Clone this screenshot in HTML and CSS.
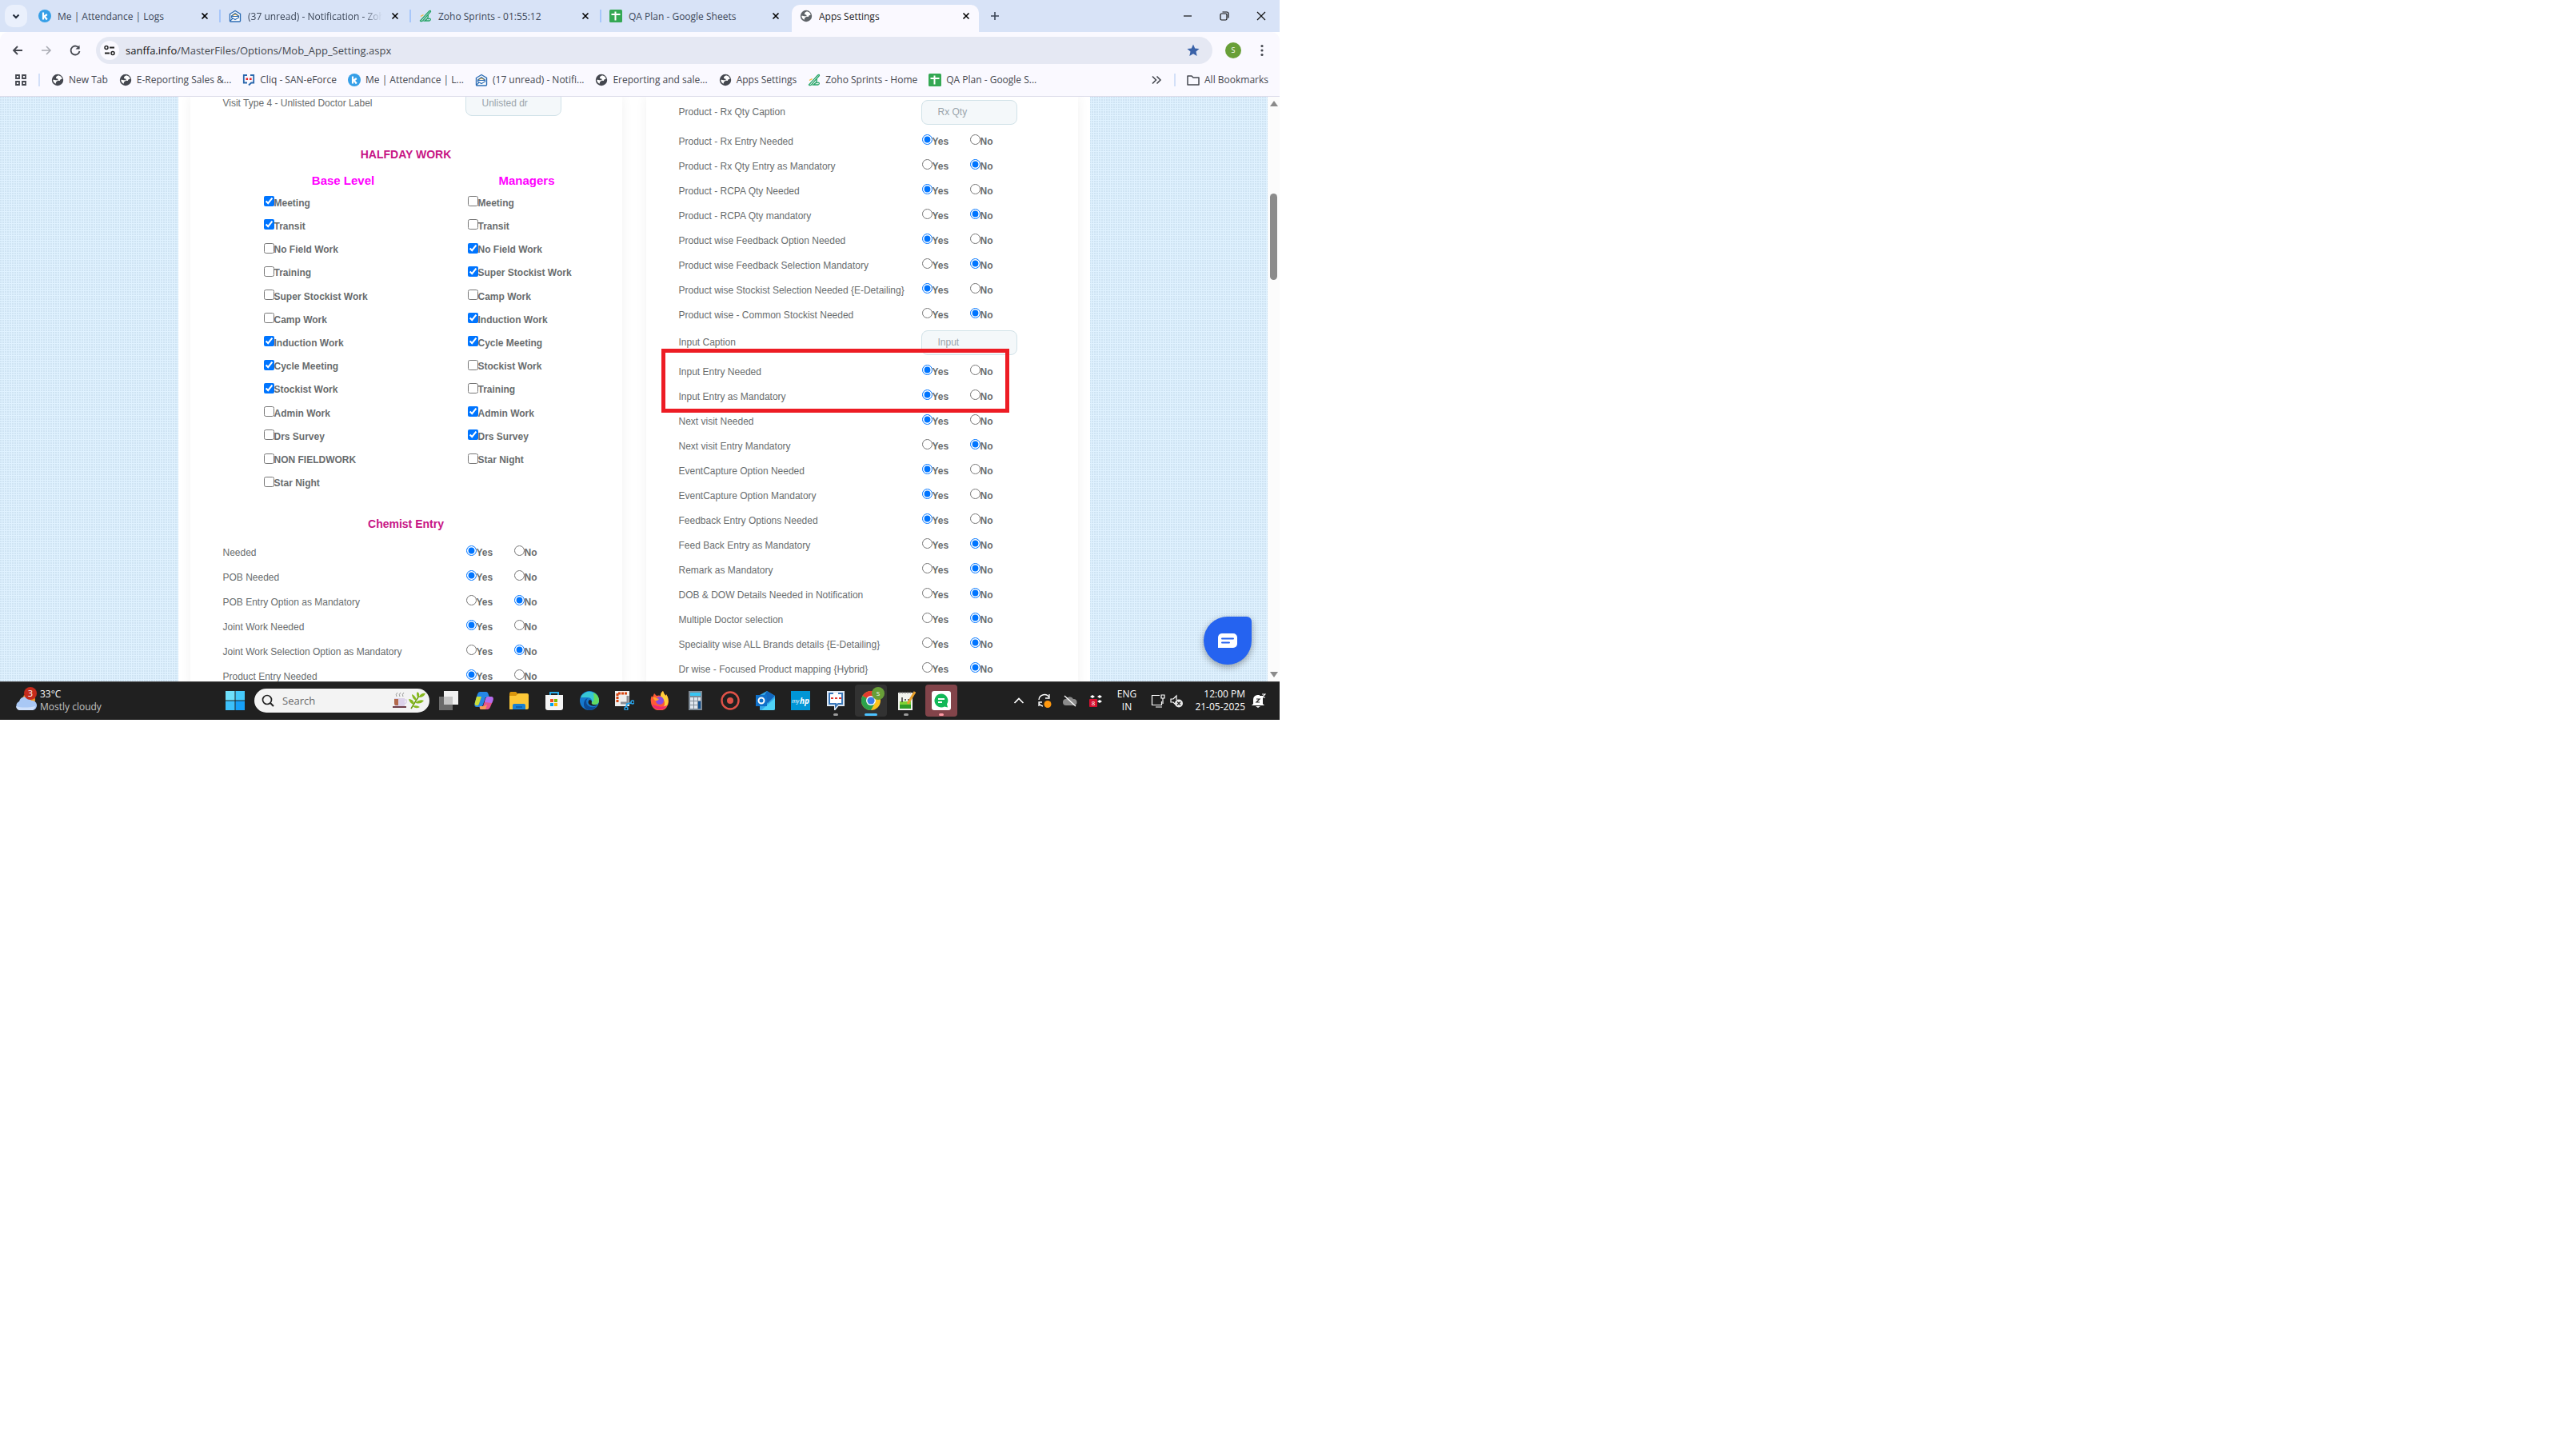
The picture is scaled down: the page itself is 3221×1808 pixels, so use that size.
FILE: index.html
```html
<!DOCTYPE html>
<html lang="en">
<head>
  <meta charset="UTF-8" />
  <meta name="viewport" content="width=device-width, initial-scale=1.0"/>
  <title>Apps Settings</title>
  <link rel="stylesheet" href="styles.css">
</head>
<body>

  <!-- Shared icons -->
  <svg class="sprite" aria-hidden="true">
    <symbol id="i-k" viewBox="0 0 16 16"><circle cx="8" cy="8" r="8" fill="#369fe7"/><path d="M6 3.500v9M10.800 6L6.800 9M7.500 8.500l3.300 4" stroke="#fff" stroke-width="2.200" fill="none"/></symbol>
    <symbol id="i-mail" viewBox="0 0 16 16"><path d="M1.500 5.500L8 1.500l6.500 4V14a1 1 0 0 1-1 1h-11a1 1 0 0 1-1-1z" fill="#fff" stroke="#2d6db5" stroke-width="1.400"/><path d="M4 8q4-4 8 0" fill="none" stroke="#f2b030" stroke-width="1.600"/><path d="M3.500 8L8 4.500 12.500 8v2L8 12.500 3.500 10zM3.500 8.500h9M2 14l3-3" fill="none" stroke="#2d6db5" stroke-width="1.100"/></symbol>
    <symbol id="i-sprint" viewBox="0 0 16 16"><path d="M1.500 14L12.500 2q2-1.500 2 0.500L5 13.500q-2 2-3.500.5zM11 6.500q1 3-1 5-1.500 1.500-3 2.500h6q2-1 1-2.500-1-1-3 .500" fill="none" stroke="#27a567" stroke-width="1.300"/><path d="M2 8.500l3.500-2" stroke="#f2b632" stroke-width="1.200"/></symbol>
    <symbol id="i-sheet" viewBox="0 0 16 16"><rect width="16" height="16" rx="1.500" fill="#34a853"/><path d="M2.500 6h11M7.500 2.500v11" stroke="#fff" stroke-width="2"/></symbol>
    <symbol id="i-globe" viewBox="0 0 16 16"><circle cx="8" cy="8" r="7.200" fill="currentColor"/><path d="M9 2.200c-1 1-3 1-3 2.800s2 1 2.500 2.200c.5 1.300-2 1.400-4 .8-1.300-.4-2.300-.2-2.300-.2.200 2 1.400 4 3.300 5l.8-2.500 2.200-1.600 2.300.3c.5-1.500 1.200-2 2.900-2.200-.3-2.400-2-4-4.700-4.600z" fill="#fff"/></symbol>
    <symbol id="i-cliq" viewBox="0 0 16 16"><path d="M6 2H1.800v9.500H6M10 2h4.200v9.500h-3L8 14.500" fill="none" stroke="#2a68ad" stroke-width="1.800"/><path d="M4.500 6.800h2.600M9 6.800h2.600" stroke="#e42527" stroke-width="2.400"/></symbol>
    <symbol id="i-close" viewBox="0 0 16 16"><path d="M4.500 4.500l7 7M11.500 4.500l-7 7" stroke="currentColor" stroke-width="1.600"/></symbol>
  </svg>

  <div class="screen">

    <!-- Browser tabs -->
    <div class="tabstrip">
      <button class="tab-search" aria-label="Search tabs"><svg viewBox="0 0 16 16"><path d="M4.500 6.500L8 10l3.500-3.500" fill="none" stroke="#1f2937" stroke-width="2"/></svg></button>
      <div class="tab"><svg class="fav"><use href="#i-k"/></svg><span>Me | Attendance | Logs</span><button aria-label="Close tab"><svg><use href="#i-close"/></svg></button></div>
      <div class="tab"><svg class="fav"><use href="#i-mail"/></svg><span class="fade">(37 unread) - Notification - Zoho</span><button aria-label="Close tab"><svg><use href="#i-close"/></svg></button></div>
      <div class="tab"><svg class="fav"><use href="#i-sprint"/></svg><span>Zoho Sprints - 01:55:12</span><button aria-label="Close tab"><svg><use href="#i-close"/></svg></button></div>
      <div class="tab last"><svg class="fav"><use href="#i-sheet"/></svg><span>QA Plan - Google Sheets</span><button aria-label="Close tab"><svg><use href="#i-close"/></svg></button></div>
      <div class="tab active"><svg class="fav"><use href="#i-globe"/></svg><span>Apps Settings</span><button aria-label="Close tab"><svg><use href="#i-close"/></svg></button></div>
      <button class="new-tab" aria-label="New tab"><svg viewBox="0 0 16 16"><path d="M8 3v10M3 8h10" stroke="#3c4758" stroke-width="1.600"/></svg></button>
      <div class="win-buttons">
        <button aria-label="Minimize"><svg viewBox="0 0 16 16"><path d="M3 8h10" stroke="#111" stroke-width="1.200"/></svg></button>
        <button aria-label="Restore"><svg viewBox="0 0 16 16"><rect x="3" y="5" width="8" height="8" rx="1.500" fill="none" stroke="#111" stroke-width="1.200"/><path d="M5.500 3H11a2 2 0 0 1 2 2v5.500" fill="none" stroke="#111" stroke-width="1.200"/></svg></button>
        <button aria-label="Close"><svg viewBox="0 0 16 16"><path d="M3 3l10 10M13 3L3 13" stroke="#111" stroke-width="1.200"/></svg></button>
      </div>
    </div>

    <!-- Address bar -->
    <div class="toolbar">
      <button aria-label="Back"><svg viewBox="0 0 16 16"><path d="M14 8H3M8 3L3 8l5 5" fill="none" stroke="#44474f" stroke-width="1.800"/></svg></button>
      <button aria-label="Forward"><svg viewBox="0 0 16 16"><path d="M2 8h11M8 3l5 5-5 5" fill="none" stroke="#a9abb3" stroke-width="1.600"/></svg></button>
      <button aria-label="Reload"><svg viewBox="0 0 16 16"><path d="M13 5.500A5.500 5.500 0 1 0 13.500 9" fill="none" stroke="#44474f" stroke-width="1.800"/><path d="M13.500 1.500v5h-5z" fill="#44474f"/></svg></button>
      <div class="omnibox">
        <span class="site-info"><svg viewBox="0 0 16 16"><path d="M8 4.500h6M2 11.500h6" stroke="#222" stroke-width="1.800"/><circle cx="4" cy="4.500" r="2" fill="none" stroke="#222" stroke-width="1.500"/><circle cx="12" cy="11.500" r="2" fill="none" stroke="#222" stroke-width="1.500"/></svg></span>
        <span class="url"><b>sanffa.info</b>/MasterFiles/Options/Mob_App_Setting.aspx</span>
        <svg class="star" viewBox="0 0 16 16"><path d="M8 .500l2.200 5 5.300.500-4 3.600 1.200 5.400L8 12.200 3.300 15l1.200-5.400-4-3.600 5.300-.500z" fill="#3a62a8"/></svg>
      </div>
      <span class="avatar">S</span>
      <button class="menu" aria-label="Menu"><svg viewBox="0 0 16 16"><circle cx="8" cy="2.500" r="1.600" fill="#44474f"/><circle cx="8" cy="8" r="1.600" fill="#44474f"/><circle cx="8" cy="13.500" r="1.600" fill="#44474f"/></svg></button>
    </div>

    <!-- Bookmarks -->
    <div class="bookmarks">
      <svg class="apps" viewBox="0 0 16 16"><path d="M2 2h4v4H2zM10 2h4v4h-4zM2 10h4v4H2zM10 10h4v4h-4z" fill="none" stroke="#44474f" stroke-width="1.800"/></svg>
      <i class="sep"></i>
      <a href="#"><svg><use href="#i-globe"/></svg>New Tab</a>
      <a href="#"><svg><use href="#i-globe"/></svg>E-Reporting Sales &amp;...</a>
      <a href="#"><svg><use href="#i-cliq"/></svg>Cliq - SAN-eForce</a>
      <a href="#"><svg><use href="#i-k"/></svg>Me | Attendance | L...</a>
      <a href="#"><svg><use href="#i-mail"/></svg>(17 unread) - Notifi...</a>
      <a href="#"><svg><use href="#i-globe"/></svg>Ereporting and sale...</a>
      <a href="#"><svg><use href="#i-globe"/></svg>Apps Settings</a>
      <a href="#"><svg><use href="#i-sprint"/></svg>Zoho Sprints - Home</a>
      <a href="#"><svg><use href="#i-sheet"/></svg>QA Plan - Google S...</a>
      <svg class="more" viewBox="0 0 16 16"><path d="M3 3.500L7.500 8 3 12.500M8.500 3.500L13 8l-4.500 4.500" fill="none" stroke="#44474f" stroke-width="1.600"/></svg>
      <i class="sep"></i>
      <a href="#" class="all"><svg viewBox="0 0 16 16"><path d="M1 3h5l2 2h7v9H1z" fill="none" stroke="#44474f" stroke-width="1.500" stroke-linejoin="round"/></svg>All Bookmarks</a>
    </div>

    <!-- Page -->
    <div class="view">
      <main class="page">
        <div class="container">

          <section class="card card-left">
            <div class="row caption"><label for="vt4">Visit Type 4 - Unlisted Doctor Label</label><input type="text" id="vt4" placeholder="Unlisted dr"></div>

            <h2 class="halfday">HALFDAY WORK</h2>
            <div class="levels">
              <div class="level">
                <h3>Base Level</h3>
                <div class="checks">
                  <label><input type="checkbox" checked>Meeting</label>
                  <label><input type="checkbox" checked>Transit</label>
                  <label><input type="checkbox">No Field Work</label>
                  <label><input type="checkbox">Training</label>
                  <label><input type="checkbox">Super Stockist Work</label>
                  <label><input type="checkbox">Camp Work</label>
                  <label><input type="checkbox" checked>Induction Work</label>
                  <label><input type="checkbox" checked>Cycle Meeting</label>
                  <label><input type="checkbox" checked>Stockist Work</label>
                  <label><input type="checkbox">Admin Work</label>
                  <label><input type="checkbox">Drs Survey</label>
                  <label><input type="checkbox">NON FIELDWORK</label>
                  <label><input type="checkbox">Star Night</label>
                </div>
              </div>
              <div class="level">
                <h3>Managers</h3>
                <div class="checks">
                  <label><input type="checkbox">Meeting</label>
                  <label><input type="checkbox">Transit</label>
                  <label><input type="checkbox" checked>No Field Work</label>
                  <label><input type="checkbox" checked>Super Stockist Work</label>
                  <label><input type="checkbox">Camp Work</label>
                  <label><input type="checkbox" checked>Induction Work</label>
                  <label><input type="checkbox" checked>Cycle Meeting</label>
                  <label><input type="checkbox">Stockist Work</label>
                  <label><input type="checkbox">Training</label>
                  <label><input type="checkbox" checked>Admin Work</label>
                  <label><input type="checkbox" checked>Drs Survey</label>
                  <label><input type="checkbox">Star Night</label>
                </div>
              </div>
            </div>

            <h2 class="chemist">Chemist Entry</h2>
            <div class="row"><span>Needed</span><label><input type="radio" name="c1" checked>Yes</label><label><input type="radio" name="c1">No</label></div>
            <div class="row"><span>POB Needed</span><label><input type="radio" name="c2" checked>Yes</label><label><input type="radio" name="c2">No</label></div>
            <div class="row"><span>POB Entry Option as Mandatory</span><label><input type="radio" name="c3">Yes</label><label><input type="radio" name="c3" checked>No</label></div>
            <div class="row"><span>Joint Work Needed</span><label><input type="radio" name="c4" checked>Yes</label><label><input type="radio" name="c4">No</label></div>
            <div class="row"><span>Joint Work Selection Option as Mandatory</span><label><input type="radio" name="c5">Yes</label><label><input type="radio" name="c5" checked>No</label></div>
            <div class="row"><span>Product Entry Needed</span><label><input type="radio" name="c6" checked>Yes</label><label><input type="radio" name="c6">No</label></div>
          </section>

          <section class="card">
            <div class="row caption"><label for="rxqty">Product - Rx Qty Caption</label><input type="text" id="rxqty" placeholder="Rx Qty"></div>
            <div class="row"><span>Product - Rx Entry Needed</span><label><input type="radio" name="d1" checked>Yes</label><label><input type="radio" name="d1">No</label></div>
            <div class="row"><span>Product - Rx Qty Entry as Mandatory</span><label><input type="radio" name="d2">Yes</label><label><input type="radio" name="d2" checked>No</label></div>
            <div class="row"><span>Product - RCPA Qty Needed</span><label><input type="radio" name="d3" checked>Yes</label><label><input type="radio" name="d3">No</label></div>
            <div class="row"><span>Product - RCPA Qty mandatory</span><label><input type="radio" name="d4">Yes</label><label><input type="radio" name="d4" checked>No</label></div>
            <div class="row"><span>Product wise Feedback Option Needed</span><label><input type="radio" name="d5" checked>Yes</label><label><input type="radio" name="d5">No</label></div>
            <div class="row"><span>Product wise Feedback Selection Mandatory</span><label><input type="radio" name="d6">Yes</label><label><input type="radio" name="d6" checked>No</label></div>
            <div class="row"><span>Product wise Stockist Selection Needed {E-Detailing}</span><label><input type="radio" name="d7" checked>Yes</label><label><input type="radio" name="d7">No</label></div>
            <div class="row"><span>Product wise - Common Stockist Needed</span><label><input type="radio" name="d8">Yes</label><label><input type="radio" name="d8" checked>No</label></div>
            <div class="row caption"><label for="inputcap">Input Caption</label><input type="text" id="inputcap" placeholder="Input"></div>
            <div class="marked">
              <div class="row"><span>Input Entry Needed</span><label><input type="radio" name="d9" checked>Yes</label><label><input type="radio" name="d9">No</label></div>
              <div class="row"><span>Input Entry as Mandatory</span><label><input type="radio" name="d10" checked>Yes</label><label><input type="radio" name="d10">No</label></div>
            </div>
            <div class="row"><span>Next visit Needed</span><label><input type="radio" name="d11" checked>Yes</label><label><input type="radio" name="d11">No</label></div>
            <div class="row"><span>Next visit Entry Mandatory</span><label><input type="radio" name="d12">Yes</label><label><input type="radio" name="d12" checked>No</label></div>
            <div class="row"><span>EventCapture Option Needed</span><label><input type="radio" name="d13" checked>Yes</label><label><input type="radio" name="d13">No</label></div>
            <div class="row"><span>EventCapture Option Mandatory</span><label><input type="radio" name="d14" checked>Yes</label><label><input type="radio" name="d14">No</label></div>
            <div class="row"><span>Feedback Entry Options Needed</span><label><input type="radio" name="d15" checked>Yes</label><label><input type="radio" name="d15">No</label></div>
            <div class="row"><span>Feed Back Entry as Mandatory</span><label><input type="radio" name="d16">Yes</label><label><input type="radio" name="d16" checked>No</label></div>
            <div class="row"><span>Remark as Mandatory</span><label><input type="radio" name="d17">Yes</label><label><input type="radio" name="d17" checked>No</label></div>
            <div class="row"><span>DOB &amp; DOW Details Needed in Notification</span><label><input type="radio" name="d18">Yes</label><label><input type="radio" name="d18" checked>No</label></div>
            <div class="row"><span>Multiple Doctor selection</span><label><input type="radio" name="d19">Yes</label><label><input type="radio" name="d19" checked>No</label></div>
            <div class="row"><span>Speciality wise ALL Brands details {E-Detailing}</span><label><input type="radio" name="d20">Yes</label><label><input type="radio" name="d20" checked>No</label></div>
            <div class="row"><span>Dr wise - Focused Product mapping {Hybrid}</span><label><input type="radio" name="d21">Yes</label><label><input type="radio" name="d21" checked>No</label></div>
          </section>

        </div>
        <button class="chat" aria-label="Chat"><svg viewBox="0 0 24 18"><path d="M5 0h14a5 5 0 0 1 5 5v8a5 5 0 0 1-5 5H0V5a5 5 0 0 1 5-5z" fill="#fff"/><path d="M5 6.500h14M5 11.500h9" stroke="#2563f0" stroke-width="2" stroke-linecap="round"/></svg></button>
      </main>
      <div class="scrollbar">
        <svg viewBox="0 0 10 7"><path d="M5 0l5 7H0z" fill="#8b8b8b"/></svg>
        <i class="thumb"></i>
        <svg viewBox="0 0 10 7"><path d="M0 0h10L5 7z" fill="#8b8b8b"/></svg>
      </div>
    </div>

    <!-- Taskbar -->
    <div class="taskbar">
      <div class="weather">
        <svg viewBox="0 0 30 34"><circle cx="18" cy="16" r="8" fill="#f59b23"/><path d="M6 29a6 6 0 0 1 0-11 8 8 0 0 1 15-1 6 6 0 0 1 2 12z" fill="#a9c8f5"/><path d="M6 29a6 6 0 0 1-4-5c6 2 16 2 24 0a6 6 0 0 1-3 5z" fill="#cfe0fa"/><circle cx="20" cy="8" r="8" fill="#c42b1c"/><text x="20" y="12" text-anchor="middle" class="badge-text">3</text></svg>
        <div><p>33°C</p><p class="dim">Mostly cloudy</p></div>
      </div>

      <div class="apps-row">
        <button aria-label="Start"><svg viewBox="0 0 24 24"><path d="M0 0h11.500v11.500H0z" fill="#6fe0fb"/><path d="M12.500 0H24v11.500H12.500z" fill="#45c9fa"/><path d="M0 12.500h11.500V24H0z" fill="#3cc0fa"/><path d="M12.500 12.500H24V24H12.500z" fill="#16a0f8"/></svg></button>
        <div class="search">
          <svg viewBox="0 0 16 16"><circle cx="7" cy="7" r="5.500" fill="none" stroke="#222" stroke-width="1.700"/><path d="M11 11l4 4" stroke="#222" stroke-width="2"/></svg>
          <input type="text" placeholder="Search" aria-label="Search">
          <svg class="cup" viewBox="0 0 42 22"><path d="M6 6q-2-3 1-5M10 6q-2-3 1-5M14 6q-2-3 1-5" stroke="#999" fill="none"/><path d="M3 8h13v10H5q-2 0-2-3z" fill="#dcd2ea"/><path d="M3 9h5v8H5q-2 0-2-3z" fill="#b3694b"/><path d="M16 10h2q1 4-2 5" fill="none" stroke="#dcd2ea" stroke-width="1.500"/><path d="M1 19h17" stroke="#6d3f4a" stroke-width="2"/><path d="M24 21L34 5" stroke="#6a9a12" stroke-width="1.500"/><path d="M32 7q-2-5 0-7 4 3 1 7zM34 6q3-5 8-4-2 5-8 5zM30 11q-5-3-5-8 5 2 6 8zM30 13q5-4 10-2-4 5-10 3zM27 16q-5-2-6-7 6 0 7 6zM26 18q5-2 9 1-5 3-9-1z" fill="#86b81e"/></svg>
        </div>
        <button aria-label="Task view"><svg viewBox="0 0 24 24"><path d="M0 7h17v17H0z" fill="#6b6b6b"/><path d="M6 0h18v17H6z" fill="#f2f2f2"/><path d="M6 7h11v10H6z" fill="#c6c6c6"/></svg></button>
        <button aria-label="Copilot"><svg viewBox="0 0 24 24"><path d="M7 1h8q2 0 3 4l1 3h-5l-3 9q-1 3-4 3H3q-4 0-2-6L4 4q1-3 3-3z" fill="#2487e6"/><path d="M1 14l2-7h6l-3 9q-1 3-4 2-2-1-1-4z" fill="#c9dc3c"/><path d="M17 23H9q-3 0-2-4h4l3-9q1-3 4-3h3q4 0 2 6l-3 7q-1 3-3 3z" fill="#e4558f"/><path d="M14 10q1-3 4-3h3q4 0 2 6l-1 2-9-1z" fill="#b36df0"/><path d="M7 19h5l4-2-2 6H9q-3 0-2-4z" fill="#f79c57"/></svg></button>
        <button aria-label="File Explorer"><svg viewBox="0 0 24 24"><path d="M0 4q0-3 2-3h6l3 3v5H0z" fill="#d9950c"/><path d="M0 6h8l3-3h11q2 0 2 2v16q0 2-2 2H0z" fill="#fcc737"/><path d="M4 23v-5q0-2 2-2h12q2 0 2 2v5z" fill="#1880d2"/><path d="M8 20h8" stroke="#0b59a4" stroke-width="1.500"/></svg></button>
        <button aria-label="Store"><svg viewBox="0 0 24 24"><path d="M7 6V2h10v4" fill="none" stroke="#27aae8" stroke-width="2"/><path d="M1 5h22v16q0 3-3 3H4q-3 0-3-3z" fill="#f5f5f5"/><path d="M7 10h4v4H7z" fill="#f05022"/><path d="M12 10h4v4h-4z" fill="#7eb900"/><path d="M7 15h4v4H7z" fill="#00a2ed"/><path d="M12 15h4v4h-4z" fill="#fdb900"/></svg></button>
        <button aria-label="Edge"><svg viewBox="0 0 24 24"><circle cx="12" cy="12" r="12" fill="#1679ce"/><path d="M1 8a12 12 0 0 1 23 4q0 5-6 5-4 0-3-3 1-5-5-6-6 0-9 0z" fill="#37c6d4"/><path d="M17 2q7 3 7 10 0 5-6 5-4 0-3-3 4 0 2-12z" fill="#63dc5f"/><path d="M10 9q-4 4 0 9 5 4 11 1-4 5-10 5-7-2-6-9 1-5 5-6z" fill="#0d4a94"/><path d="M12 11q-3 3 0 6 4 3 9 1l1-1q-6 1-7-1-1-1 0-2 0-3-3-3z" fill="#202020"/></svg></button>
        <button aria-label="Snipping Tool"><svg viewBox="0 0 24 24"><path d="M0 0h18v19H0z" fill="#eee"/><path d="M3 14V3h12" fill="none" stroke="#d8440e" stroke-width="3" stroke-dasharray="3 1"/><path d="M16 6v9h-9" fill="none" stroke="#8a8d94" stroke-width="3"/><circle cx="22" cy="14" r="2" fill="none" stroke="#29a4ea" stroke-width="1.500"/><circle cx="14" cy="22" r="2" fill="none" stroke="#29a4ea" stroke-width="1.500"/><path d="M20 15l-5 1-1 4" fill="none" stroke="#29a4ea" stroke-width="2"/></svg></button>
        <button aria-label="Firefox"><svg viewBox="0 0 24 24"><path d="M2 6l1 2 2-5 3 3q3-1 5 0 0-4 3-6 1 4 4 6l0-2q3 4 3 9a11 11 0 0 1-22 1Q0 9 2 6z" fill="#ff5a36"/><path d="M13 6q0-4 3-6 1 4 4 6l0-2q4 6 2 12-2 5-7 6 5-5 2-11z" fill="#ffcf3a"/><path d="M2 17q4 7 11 6 5 0 8-5-6 3-11 1z" fill="#ee2a73"/><circle cx="12" cy="12" r="5" fill="#8a4be0"/><path d="M3 8q3-1 5 1l3 1q-2 3-5 2z" fill="#ffa32b"/></svg></button>
        <button aria-label="Calculator"><svg viewBox="0 0 24 24"><path d="M4 0h17v24H4z" fill="#7e8a96"/><path d="M6 2h13v4H6z" fill="#38c5f2"/><path d="M6 8h4v4H6zM11 8h4v4h-4zM16 8h3v4h-3zM6 13h4v4H6zM11 13h4v4h-4zM6 18h4v4H6zM11 18h4v4h-4z" fill="#dfe6ee"/><path d="M16 13h3v9h-3z" fill="#11508f"/></svg></button>
        <button aria-label="Recorder"><svg viewBox="0 0 24 24"><circle cx="12" cy="12" r="10.500" fill="none" stroke="#e05248" stroke-width="2.400"/><circle cx="12" cy="12" r="4" fill="#e05248"/></svg></button>
        <button aria-label="Outlook"><svg viewBox="0 0 24 24"><path d="M5 5l9-5 10 6v16q0 2-2 2H5z" fill="#33a8ea"/><path d="M14 0l10 6-9 9-7-5z" fill="#1267bd"/><path d="M24 9v13q0 2-2 2H7z" fill="#4fd3f8"/><path d="M0 5h14v14H0z" fill="#0f70c9"/><circle cx="7" cy="12" r="3.500" fill="none" stroke="#fff" stroke-width="2"/></svg></button>
        <button aria-label="myHP"><svg viewBox="0 0 24 24"><path d="M0 0h24v24H0z" fill="#0096d6"/><text x="1" y="15" class="hp-my">my</text><text x="11" y="16" class="hp">hp</text></svg></button>
        <button aria-label="Cliq" class="running"><svg viewBox="0 0 24 24"><path d="M2 1h20v17h-7l-4 5v-5H2z" fill="#fff" stroke="#dfe8f2" stroke-width="2"/><path d="M9 3H4v13h8v3l3-3h5V3h-5" fill="none" stroke="#3b78ba" stroke-width="2"/><path d="M6 9h3M11 9h3M16 9h3" stroke="#e2372f" stroke-width="2"/></svg></button>
        <button aria-label="Chrome" class="running current"><svg viewBox="0 0 24 24"><circle cx="12" cy="12" r="12" fill="#fcc31e"/><path d="M12 12L1.600 6A12 12 0 0 1 22.400 6z" fill="#e33b2e"/><path d="M12 12L1.600 6A12 12 0 0 0 12 24l5-9z" fill="#2ca14c"/><circle cx="12" cy="12" r="6" fill="#fff"/><circle cx="12" cy="12" r="4.600" fill="#3b7de8"/></svg><span class="mini">S</span></button>
        <button aria-label="Notepad++" class="running"><svg viewBox="0 0 24 24"><path d="M2 2h18v22H2z" fill="#f1f3ee"/><path d="M4 13h14v9H4z" fill="#7fd134"/><path d="M4 17h14v5H4z" fill="#2f9c26"/><path d="M3 2h16" stroke="#777" stroke-width="2" stroke-dasharray="1 1"/><path d="M7 8v6M10 11h2M14 11h2" stroke="#333" stroke-width="1.500"/><path d="M23 1L14 16" stroke="#e8a02c" stroke-width="3"/></svg></button>
        <button aria-label="Chat recorder" class="running alert"><svg viewBox="0 0 24 24"><rect width="24" height="24" rx="3" fill="#fff"/><path d="M12 3.500a8.500 8.500 0 1 0 4 16l4 1-1-4a8.500 8.500 0 0 0-7-13z" fill="#12b857"/><path d="M8 10h8M8 14h5" stroke="#fff" stroke-width="2"/></svg></button>
      </div>

      <div class="tray">
        <svg viewBox="0 0 20 20"><path d="M4.500 13L10 7.500 15.500 13" fill="none" stroke="#fff" stroke-width="1.600"/></svg>
        <svg viewBox="0 0 20 20"><path d="M3 9a7 7 0 0 1 13-3M16 2v5h-5M8 17a7 7 0 0 1-5-4M3 17v-5h4" fill="none" stroke="#fff" stroke-width="1.300"/><circle cx="14" cy="14.500" r="4.500" fill="#ff980f"/></svg>
        <svg viewBox="0 0 20 20"><path d="M5 16a4 4 0 0 1 0-8 5 5 0 0 1 9 0 4 4 0 0 1 1 8z" fill="#8b8b8b"/><path d="M3 4l14 13" stroke="#fff" stroke-width="1.300"/></svg>
        <svg viewBox="0 0 20 20"><path d="M3 5l3-2 3 2-3 2zM12 5l3-2 3 2-3 2zM12 11l3-2 3 2-3 2z" fill="#fff"/><rect x="2" y="8" width="10" height="10" rx="1" fill="#d4102f"/><text x="7" y="16" text-anchor="middle" class="tiny">8</text></svg>
        <div class="lang"><p>ENG</p><p>IN</p></div>
        <svg viewBox="0 0 20 20"><path d="M12 3.500H2.500v12h12V11M7 18h8" fill="none" stroke="#fff" stroke-width="1.200"/><path d="M14 3h4v4h-4zM16 7v7" fill="none" stroke="#fff" stroke-width="1.200"/></svg>
        <svg viewBox="0 0 20 20"><path d="M9 15L6 12H3V8h3l4-4v5" fill="none" stroke="#fff" stroke-width="1.200"/><circle cx="13" cy="13.500" r="5" fill="#e8e8e8"/><path d="M11 11.500l4 4M15 11.500l-4 4" stroke="#222" stroke-width="1.300"/></svg>
        <div class="clock"><p>12:00 PM</p><p>21-05-2025</p></div>
        <svg viewBox="0 0 20 20"><path d="M4 14V9q0-5 5-6h3v1h4v10l2 2H2zM7 17h6l-3 2z" fill="#fff"/><path d="M8 8h4l-4 4h4" fill="none" stroke="#222" stroke-width="1.200"/><path d="M15 2h4l-4 4h4" fill="none" stroke="#fff" stroke-width="1.200"/></svg>
      </div>
    </div>

  </div>
</body>
</html>
```

FILE: styles.css
```css
* {
  box-sizing: border-box;
  margin: 0;
  padding: 0;
}

body {
  background-color: #ffffff;
  font-family: "Segoe UI", "Open Sans", sans-serif;
  font-size: 12px;
}

button {
  background: none;
  border: none;
  font: inherit;
  cursor: pointer;
}

svg {
  display: block;
  width: 16px;
  height: 16px;
  flex: none;
}

.sprite {
  position: absolute;
  width: 0;
  height: 0;
}

.screen {
  max-width: 1600px;
}

/* tabs */
.tabstrip {
  display: flex;
  height: 40px;
  padding: 6px 0 0 6px;
  background-color: #d8e3f7;
  color: #3c4758;
}

.tab-search {
  width: 28px;
  height: 28px;
  padding: 6px;
  margin-right: 4px;
  border-radius: 10px;
  background-color: #eaf0fc;
}

.tab {
  display: flex;
  align-items: center;
  width: 238px;
  height: 28px;
  padding: 0 12px 0 10px;
  gap: 8px;
  position: relative;
}

.tab:not(.active):not(.last)::after {
  content: "";
  position: absolute;
  right: 0;
  top: 6px;
  width: 2px;
  height: 16px;
  background-color: #a8c7fa;
}

.tab span {
  flex: 1;
  white-space: nowrap;
  overflow: hidden;
}

.tab .fade {
  mask-image: linear-gradient(to right, #000 85%, transparent);
}

.tab.active {
  width: 234px;
  height: 34px;
  padding: 0 8px 6px 10px;
  border-radius: 10px 10px 0 0;
  background-color: #faf9ff;
  color: #1f1f1f;
}

.fav {
  color: #5f6368;
}

.new-tab {
  width: 40px;
  height: 28px;
  padding: 0 12px;
}

.win-buttons {
  display: flex;
  margin-left: auto;
}

.win-buttons button {
  width: 46px;
  height: 28px;
  padding: 0 15px;
}

/* address bar */
.toolbar {
  display: flex;
  align-items: center;
  height: 46px;
  padding: 0 14px;
  gap: 20px;
  border-radius: 10px 10px 0 0;
  background-color: #faf9ff;
}

.omnibox {
  flex: 1;
  display: flex;
  align-items: center;
  height: 34px;
  gap: 8px;
  padding: 0 16px 0 5px;
  margin-left: -2px;
  border-radius: 17px;
  background-color: #e5e8f3;
}

.site-info {
  padding: 4px;
  border-radius: 50%;
  background-color: #faf9ff;
}

.url {
  flex: 1;
  font-size: 13px;
  color: #44474f;
}

.url b {
  font-weight: normal;
  color: #111111;
}

.avatar {
  width: 20px;
  height: 20px;
  margin-left: -4px;
  border-radius: 50%;
  background-color: #689f38;
  color: #ffffff;
  font-size: 9px;
  line-height: 20px;
  text-align: center;
}

.menu {
  margin-left: -2px;
}

/* bookmarks */
.bookmarks {
  display: flex;
  align-items: center;
  height: 35px;
  padding: 0 14px 7px 18px;
  gap: 14px;
  border-bottom: 1px solid #dcdcea;
  background-color: #faf9ff;
  color: #44474f;
}

.bookmarks a {
  display: flex;
  align-items: center;
  gap: 6px;
  color: inherit;
  text-decoration: none;
  white-space: nowrap;
}

.bookmarks .sep {
  width: 2px;
  height: 16px;
  background-color: #d3e0f8;
}

.bookmarks .more {
  margin-left: auto;
}

/* page */
.view {
  display: flex;
  max-height: 731px;
  overflow: hidden;
}

.page {
  flex: 1;
  position: relative;
  background-color: #e0f2ff;
  background-image: radial-gradient(circle at 1px 1px, #a5c0d6 0, #e0f2ff 1px);
  background-size: 3px 3px;
  font-family: Arial, "Liberation Sans", sans-serif;
  color: #696d6e;
}

.container {
  display: grid;
  grid-template-columns: 1fr 1fr;
  gap: 30px;
  max-width: 1140px;
  margin: 0 auto;
  padding: 0 15px;
  background-color: #ffffff;
}

.card {
  padding: 0 30px 0 41px;
  box-shadow: 0 0 14px rgba(0, 0, 0, 0.06);
}

.card-left .row:first-child {
  margin-top: -11px;
}

.row {
  display: grid;
  grid-template-columns: 304px 60px 60px;
  align-items: center;
  height: 31px;
}

.row.caption {
  grid-template-columns: 303px 120px;
  height: 40px;
  padding-bottom: 2px;
}

.row.caption label {
  font-weight: normal;
}

.row input[type="text"] {
  width: 120px;
  height: 31px;
  padding: 0 20px;
  border: 1px solid #d1e2e8;
  border-radius: 8px;
  background-color: #f4f8fa;
  font: inherit;
  color: #696d6e;
}

.row input::placeholder {
  color: #9aa4ab;
}

.card label {
  display: flex;
  align-items: center;
  font-weight: bold;
}

input[type="radio"],
input[type="checkbox"] {
  width: 13px;
  height: 13px;
  margin-bottom: 4px;
}

h2 {
  font-size: 14px;
  line-height: 20px;
  text-align: center;
  color: #c71585;
  padding-right: 11px;
}

.halfday {
  margin: 33px 0 13px;
}

.chemist {
  margin: 26px 0 10px;
}

.levels {
  display: grid;
  grid-template-columns: 199px 148px;
  gap: 56px;
  padding-left: 51px;
}

h3 {
  font-size: 15px;
  line-height: 20px;
  margin-bottom: 3px;
  text-align: center;
  color: #ff00ff;
}

.checks {
  display: grid;
  grid-template-rows: repeat(13, 1fr);
  height: 380px;
}

/* red outline over the two input entry rows */
.marked {
  position: relative;
}

.marked::after {
  content: "";
  box-sizing: border-box;
  position: absolute;
  top: -13px;
  bottom: -5px;
  left: -22px;
  width: 435px;
  border: 5px solid #ed1c24;
  pointer-events: none;
}

.chat {
  position: absolute;
  right: 20px;
  bottom: 21px;
  width: 60px;
  height: 60px;
  border-radius: 50% 6px 50% 50%;
  background-color: #2563f0;
  box-shadow: 0 3px 8px rgba(0, 0, 0, 0.35);
}

.chat svg {
  width: 24px;
  height: 18px;
  margin: 0 auto;
}

.scrollbar {
  display: flex;
  flex-direction: column;
  align-items: center;
  width: 15px;
  padding: 5px 0;
  background-color: #fcfcfc;
}

.scrollbar svg {
  width: 10px;
  height: 7px;
}

.thumb {
  width: 9px;
  height: 108px;
  margin: 109px 0 auto;
  border-radius: 5px;
  background-color: #8b8b8b;
}

/* taskbar */
.taskbar {
  display: flex;
  align-items: center;
  height: 48px;
  padding-bottom: 2px;
  border-top: 1px solid #444444;
  background-color: #202020;
  color: #ffffff;
}

.taskbar p {
  line-height: 16px;
}

.weather {
  display: flex;
  align-items: center;
  gap: 2px;
  width: 254px;
  padding-left: 18px;
}

.weather svg {
  width: 30px;
  height: 34px;
}

.weather .dim {
  color: #c4c4c4;
}

.badge-text {
  font-size: 11px;
  fill: #ffffff;
}

.apps-row {
  display: flex;
  gap: 4px;
  padding-left: 20px;
}

.apps-row button {
  position: relative;
  width: 40px;
  height: 40px;
  padding: 0 8px;
  border-radius: 4px;
}

.apps-row button svg {
  width: 24px;
  height: 24px;
}

.apps-row .running::after {
  content: "";
  position: absolute;
  left: 17px;
  bottom: 1px;
  width: 6px;
  height: 3px;
  border-radius: 2px;
  background-color: #9a9a9a;
}

.apps-row .current {
  background-color: #323232;
}

.apps-row .current::after {
  left: 12px;
  width: 16px;
  background-color: #4cc2ff;
}

.apps-row .alert {
  background-color: #82444a;
}

.apps-row .alert::after {
  background-color: #ff99a4;
}

.mini {
  position: absolute;
  top: 3px;
  right: 3px;
  width: 16px;
  height: 16px;
  border-radius: 50%;
  background-color: #689f38;
  color: #ffffff;
  font-size: 8px;
  line-height: 16px;
}

.hp-my,
.hp {
  font-size: 7px;
  font-style: italic;
  fill: #ffffff;
}

.hp {
  font-size: 10px;
  font-weight: bold;
}

.search {
  display: flex;
  align-items: center;
  gap: 10px;
  width: 219px;
  height: 30px;
  margin-top: 5px;
  padding: 0 5px 0 9px;
  border-radius: 15px;
  background-color: #f3f3f3;
}

.search input {
  flex: 1;
  width: 100px;
  border: none;
  background: none;
  font: inherit;
  font-size: 13px;
}

.search input::placeholder {
  color: #666666;
}

.search .cup {
  width: 42px;
  height: 22px;
}

.tray {
  display: flex;
  align-items: center;
  gap: 12px;
  margin-left: auto;
  padding-right: 17px;
}

.tray svg {
  width: 20px;
  height: 20px;
}

.tiny {
  font-size: 8px;
  fill: #ffffff;
}

.lang {
  width: 34px;
  text-align: center;
}

.tray .lang + svg {
  margin-right: -9px;
}

.clock {
  width: 64px;
  margin-right: -6px;
  text-align: right;
}
```
